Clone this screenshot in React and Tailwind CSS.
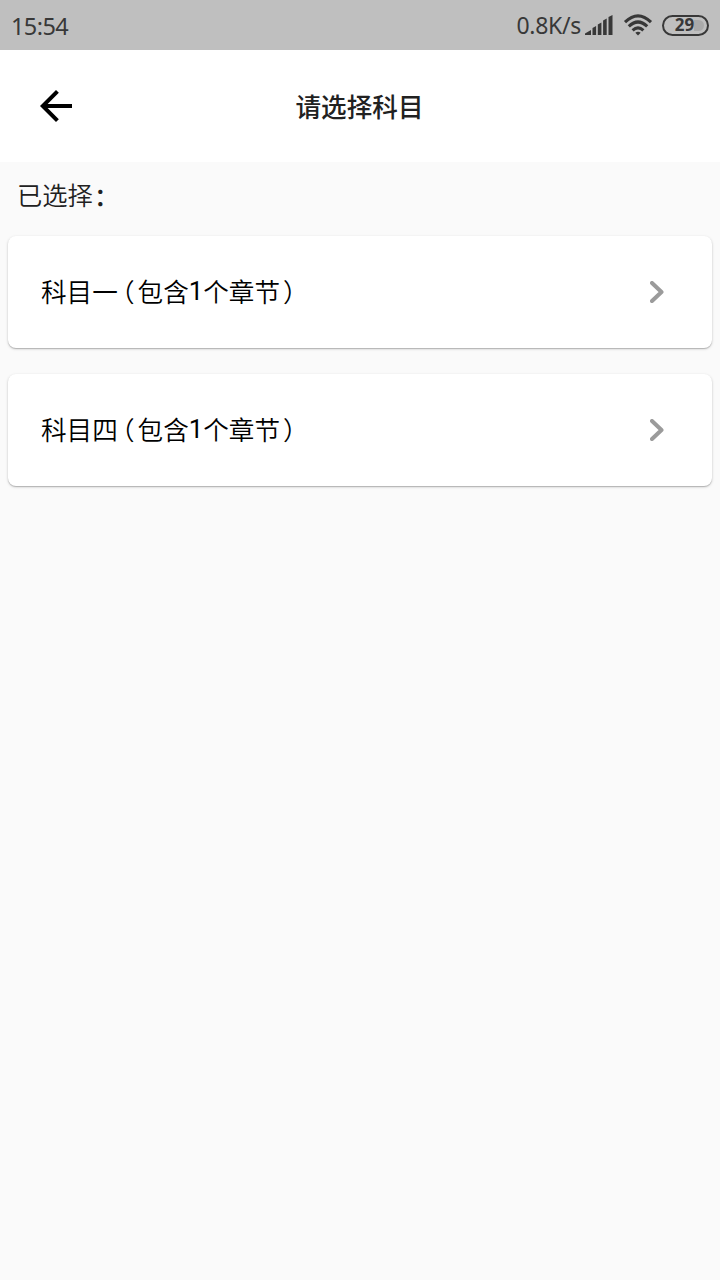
import { useState } from "react"

const subjects = [
  { id: 1, name: "科目一", chapters: 1 },
  { id: 4, name: "科目四", chapters: 1 },
]

const StatusBar = () => (
  <div className="flex h-[50px] items-center bg-[#bfbfbf] pl-[11px] pr-[11px] font-['Noto_Sans',sans-serif] text-[#383838]">
    <span className="pt-px text-[23.500px] leading-[50px] tracking-[-0.600px]">15:54</span>

    <div className="ml-auto flex items-center">
      <span className="text-[23px] leading-[50px] tracking-[-0.300px]">0.8K/s</span>

      {/* Signal */}
      <svg className="ml-1 h-5 w-7" viewBox="0 0 28 20" fill="currentColor">
        <path d="M0 20v-1.500L6 15v5zM7.500 13l3.600-2v9H7.500zM12.800 9.500l3.600-2V20h-3.600zM18.100 5.500l3.600-2V20h-3.600zM23.500 2l4-2v20h-4z" />
      </svg>

      {/* Wifi */}
      <svg className="ml-[10px] h-[22px] w-[30px]" viewBox="0 0 30 22" fill="none" stroke="currentColor" strokeWidth="3.1">
        <path d="M2 8.200Q15-4.600 28 8.200M5.800 12.400Q15 3.600 24.200 12.400M9.600 16.400Q15 11.400 20.400 16.400" />
        <path d="M12.300 18.800Q15 16.600 17.700 18.800L15 21.500z" fill="currentColor" stroke="none" />
      </svg>

      {/* Battery */}
      <div className="relative ml-[9px] flex h-[21px] w-[47px] items-center justify-center rounded-full border-2 border-current">
        <div className="absolute top-[3px] right-[3px] h-[11px] w-[10px] rounded-r-full bg-[#aaa]" />
        <span className="relative pr-[2px] pb-px text-[17px] leading-none font-bold">29</span>
      </div>
    </div>
  </div>
)

const SubjectCard = ({ subject, onSelect }) => (
  <button
    type="button"
    onClick={() => onSelect(subject)}
    className="flex h-28 w-full items-center rounded-lg bg-white pl-[33px] pr-12 text-left text-black shadow-[0_1px_3px_rgba(0,0,0,0.18),0_1px_1px_rgba(0,0,0,0.18)]"
  >
    <span className="flex pb-[2px] text-[25.600px] leading-[38px] font-[350]">
      <span>{subject.name}</span>
      <span className="ml-[4px] mr-[3px] [font-feature-settings:'halt']">（</span>
      <span>包含</span>
      <span className="font-['Roboto',sans-serif] font-normal">{subject.chapters}</span>
      <span>个章节</span>
      <span className="ml-[3px] [font-feature-settings:'halt']">）</span>
    </span>
    <svg className="ml-auto h-[22px] w-[14px]" viewBox="0 0 14 22" fill="none" stroke="#9b9b9b" strokeWidth="4" strokeLinecap="round" strokeLinejoin="round">
      <path d="M2 2l9.500 9L2 20" />
    </svg>
  </button>
)

export default function SelectSubjectPage() {
  const [selected, setSelected] = useState(null)

  return (
    <div className="min-h-screen w-full bg-[#fafafa] font-['Noto_Sans_CJK_SC',sans-serif]">
      <StatusBar />

      {/* Header */}
      <header className="grid h-28 grid-cols-[80px_1fr_80px] items-center bg-white">
        <button type="button" className="ml-8" aria-label="返回">
          <svg className="h-12 w-12" viewBox="0 0 24 24">
            <path d="M20 11H7.830l5.590-5.590L12 4l-8 8 8 8 1.410-1.410L7.830 13H20v-2z" />
          </svg>
        </button>
        <h1 className="pr-px text-center text-[25.600px] leading-[38px] font-medium text-[#212121]">
          <span className="block pb-px">请选择科目</span>
        </h1>
      </header>

      <p className="flex h-[74px] pl-[17px] pt-[13px] text-[25.300px] leading-[38px] font-[350] text-[#212121]">
        <span>已选择</span>
        <span className="ml-px pt-px font-medium">：</span>
        <span>{selected?.name}</span>
      </p>

      {/* Subject list */}
      <main className="flex flex-col gap-[26px] px-2">
        {subjects.map((subject) => (
          <SubjectCard key={subject.id} subject={subject} onSelect={setSelected} />
        ))}
      </main>
    </div>
  )
}
